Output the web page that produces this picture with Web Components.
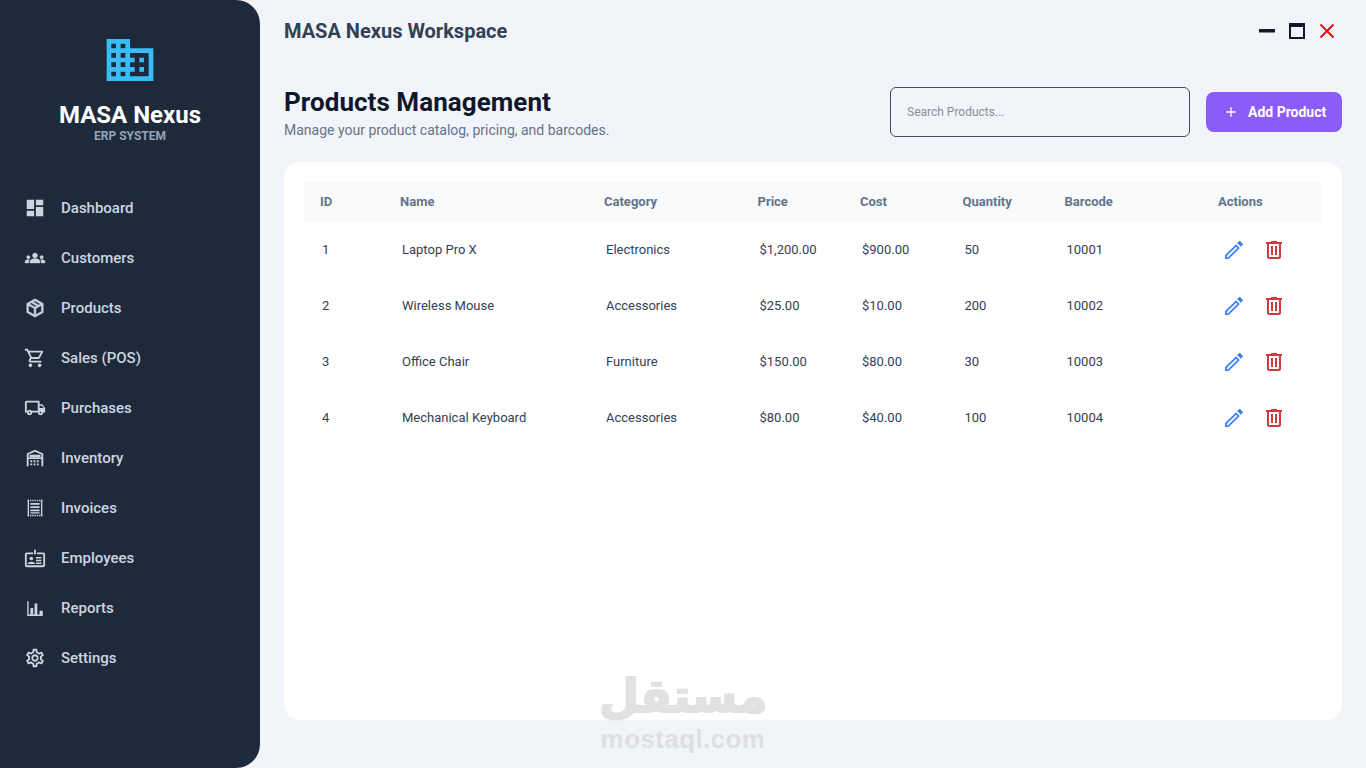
<!DOCTYPE html>
<html>
<head>
<meta charset="utf-8">
<title>MASA Nexus</title>
<style>
html,body{margin:0;height:100%;}
body{background:#f1f5f9;font-family:Roboto,"Liberation Sans",sans-serif;overflow:hidden;}
</style>
</head>
<body>
<app-shell>
  <side-bar slot="side"></side-bar>
  <top-bar slot="top"></top-bar>
  <page-header slot="main"></page-header>
  <products-table slot="main"></products-table>
</app-shell>
<water-mark></water-mark>

<script>
const ICONS = {
    logo:'<path d="M12 7V3H2v18h20V7H10zM6 19H4v-2h2v2zm0-4H4v-2h2v2zm0-4H4V9h2v2zm0-4H4V5h2v2zm4 12H8v-2h2v2zm0-4H8v-2h2v2zm0-4H8V9h2v2zm0-4H8V5h2v2zm10 12h-8v-2h2v-2h-2v-2h2v-2h-2V9h8v10zm-2-8h-2v2h2v-2zm0 4h-2v2h2v-2z"/>',
    dashboard:'<path d="M3 13h8V3H3v10zm0 8h8v-6H3v6zm10 0h8V11h-8v10zm0-18v6h8V3h-8z"/>',
    customers:'<g transform="translate(1.1 1.1) scale(.908)"><path stroke="currentColor" stroke-width=".5" d="M12 12.75c1.63 0 3.07.39 4.24.9 1.08.48 1.76 1.56 1.76 2.73V18H6v-1.61c0-1.18.68-2.26 1.76-2.73 1.17-.52 2.61-.91 4.24-.91zM4 13c1.1 0 2-.9 2-2s-.9-2-2-2-2 .9-2 2 .9 2 2 2zm1.13 1.1c-.37-.06-.74-.1-1.13-.1-.99 0-1.93.21-2.78.58C.48 14.9 0 15.62 0 16.43V18h4.5v-1.61c0-.83.23-1.61.63-2.29zM20 13c1.1 0 2-.9 2-2s-.9-2-2-2-2 .9-2 2 .9 2 2 2zm4 3.43c0-.81-.48-1.53-1.22-1.85-.85-.37-1.79-.58-2.78-.58-.39 0-.76.04-1.13.1.4.68.63 1.46.63 2.29V18H24v-1.57zM12 6c1.66 0 3 1.34 3 3s-1.34 3-3 3-3-1.34-3-3 1.34-3 3-3z"/></g>',
    products:'<path stroke="currentColor" stroke-width=".5" fill-rule="evenodd" d="M12 2l9 5v10l-9 5-9-5V7l9-5zM5 9.2v6.6l6 3.4v-6.6L5 9.2zm8 3.4v6.6l6-3.4V9.2l-6 3.4zM6.1 7.5L12 10.8l1.9-1.1-5.9-3.3-1.9 1.1zm3.900-2.200l5.900 3.300 2-1.100L12 4.300l-2 1z"/>',
    sales:'<path d="M15.55 13c.75 0 1.41-.41 1.75-1.03l3.58-6.49c.37-.66-.11-1.48-.87-1.48H5.21l-.94-2H1v2h2l3.6 7.59-1.35 2.44C4.52 15.37 5.48 17 7 17h12v-2H7l1.1-2h7.45zM6.16 6h12.15l-2.76 5H8.53L6.16 6zM7 18c-1.1 0-1.99.9-1.99 2S5.9 22 7 22s2-.9 2-2-.9-2-2-2zm10 0c-1.1 0-1.99.9-1.99 2s.89 2 1.99 2 2-.9 2-2-.9-2-2-2z"/>',
    purchases:'<path d="M20 8h-3V4H3c-1.1 0-2 .9-2 2v11h2c0 1.66 1.34 3 3 3s3-1.34 3-3h6c0 1.66 1.34 3 3 3s3-1.34 3-3h2v-5l-3-4zm-.5 1.5l1.96 2.5H17V9.5h2.5zM6 18c-.55 0-1-.45-1-1s.45-1 1-1 1 .45 1 1-.45 1-1 1zm2.22-3c-.55-.61-1.33-1-2.22-1s-1.67.39-2.22 1H3V6h12v9H8.22zM18 18c-.55 0-1-.45-1-1s.45-1 1-1 1 .45 1 1-.45 1-1 1z"/>',
    inventory:'<path fill-rule="evenodd" d="M12 3l9 4v14h-2v-8H5v8H3V7l9-4zM5 11.500h14V8.300L12 5.200 5 8.300v3.200z"/><path d="M6 8.500h12v3H6zM7 14.500h2v2H7zM10.500 14.500h2v2h-2zM14 14.500h2v2h-2zM7 18h2v2H7zM10.500 18h2v2h-2zM14 18h2v2h-2z"/>',
    invoices:'<path d="M4 3.800h16M4 20.200h16" fill="none" stroke="currentColor" stroke-width="1.600" stroke-dasharray="1.500 1"/><path d="M4 3h1.500v18H4zM18.500 3H20v18h-1.500zM7 6.500h10v2H7zM7 10h10v2H7zM7 13.500h10v2H7zM7 16.500h10v1.500H7z"/>',
    employees:'<path fill-rule="evenodd" d="M3 6h7v2H3v12h18V8h-7V6h7c1.100 0 2 .9 2 2v12c0 1.100-.9 2-2 2H3c-1.100 0-2-.9-2-2V8c0-1.100.9-2 2-2z"/><path d="M11 3h2v5h-2zM13 11h6v1.500h-6zM13 14h6v1.500h-6zM13 17h6v1.500h-6z"/><circle cx="8" cy="12.500" r="2"/><path d="M4 18.500c0-1.600 2-2.500 4-2.500s4 .9 4 2.500z"/>',
    reports:'<path d="M3.500 4.500H5V19h15.500v1.700h-17zM7 12h3v7H7zM11.500 7h3v12h-3zM17 15h3.500v4H17z"/>',
    settings:'<path d="M19.43 12.98c.04-.32.07-.64.07-.98 0-.34-.03-.66-.07-.98l2.11-1.65c.19-.15.24-.42.12-.64l-2-3.46c-.09-.16-.26-.25-.44-.25-.06 0-.12.01-.17.03l-2.49 1c-.52-.4-1.08-.73-1.69-.98l-.38-2.65C14.46 2.18 14.25 2 14 2h-4c-.25 0-.46.18-.49.42l-.38 2.65c-.61.25-1.17.59-1.69.98l-2.49-1c-.06-.02-.12-.03-.18-.03-.17 0-.34.09-.43.25l-2 3.46c-.13.22-.07.49.12.64l2.11 1.65c-.04.32-.07.65-.07.98 0 .33.03.66.07.98l-2.11 1.65c-.19.15-.24.42-.12.64l2 3.46c.09.16.26.25.44.25.06 0 .12-.01.17-.03l2.49-1c.52.4 1.08.73 1.69.98l.38 2.65c.03.24.24.42.49.42h4c.25 0 .46-.18.49-.42l.38-2.65c.61-.25 1.17-.59 1.69-.98l2.49 1c.06.02.12.03.18.03.17 0 .34-.09.43-.25l2-3.46c.12-.22.07-.49-.12-.64l-2.11-1.65zm-1.98-1.71c.04.31.05.52.05.73 0 .21-.02.43-.05.73l-.14 1.13.89.7 1.08.84-.7 1.21-1.27-.51-1.04-.42-.9.68c-.43.32-.84.56-1.25.73l-1.06.43-.16 1.13-.2 1.35h-1.4l-.19-1.35-.16-1.13-1.06-.43c-.43-.18-.83-.41-1.23-.71l-.91-.7-1.06.43-1.27.51-.7-1.21 1.08-.84.89-.7-.14-1.13c-.03-.31-.05-.54-.05-.74s.02-.43.05-.73l.14-1.13-.89-.7-1.08-.84.7-1.21 1.27.51 1.04.42.9-.68c.43-.32.84-.56 1.25-.73l1.06-.43.16-1.13.2-1.35h1.39l.19 1.35.16 1.13 1.06.43c.43.18.83.41 1.23.71l.91.7 1.06-.43 1.27-.51.7 1.21-1.07.85-.89.7.14 1.13zM12 8c-2.21 0-4 1.79-4 4s1.79 4 4 4 4-1.79 4-4-1.79-4-4-4zm0 6c-1.1 0-2-.9-2-2s.9-2 2-2 2 .9 2 2-.9 2-2 2z"/>',
    edit:'<path d="M3 17.25V21h3.75L17.81 9.94l-3.75-3.75L3 17.25zM4.700 19.300v-1.300l9.360-9.360 1.300 1.300L6 19.300H4.700zM20.71 7.04c.39-.39.39-1.02 0-1.41l-2.34-2.34c-.39-.39-1.02-.39-1.41 0l-1.83 1.83 3.75 3.75 1.83-1.83z"/>',
    trash:'<path d="M9 3v1H4v2h1v13c0 1.100.9 2 2 2h10c1.100 0 2-.9 2-2V6h1V4h-5V3H9zM7 6h10v13H7V6zm2 2v9h2V8H9zm4 0v9h2V8h-2z"/>',
    plus:'<path d="M19 13h-6v6h-2v-6H5v-2h6V5h2v6h6v2z"/>'
}

function icon(name,size){
    return `<svg width="${size}" height="${size}" viewBox="0 0 24 24" fill="currentColor" aria-hidden="true">${ICONS[name]}</svg>`
}

class AppShell extends HTMLElement{
    constructor(){
        super()
        this.attachShadow({mode:'open'})
        this.shadowRoot.innerHTML = `
        <style>
            :host{display:flex;height:768px;width:1366px;}
            .content{flex:1;min-width:0;display:flex;flex-direction:column;padding:0 24px;}
            .main{flex:1;min-height:0;display:flex;flex-direction:column;padding-bottom:48px;}
        </style>
        <slot name="side"></slot>
        <div class="content">
            <slot name="top"></slot>
            <div class="main"><slot name="main"></slot></div>
        </div>`
    }
}

class SideBar extends HTMLElement{
    constructor(){
        super()
        this.attachShadow({mode:'open'})
        const items = [
            ['dashboard','Dashboard'],['customers','Customers'],['products','Products'],
            ['sales','Sales (POS)'],['purchases','Purchases'],['inventory','Inventory'],
            ['invoices','Invoices'],['employees','Employees'],['reports','Reports'],['settings','Settings']
        ]
        this.shadowRoot.innerHTML = `
        <style>
            :host{display:block;width:260px;flex:none;height:768px;background:#1e293b;border-radius:0 24px 24px 0;color:#cbd5e1;}
            .brand{display:flex;flex-direction:column;align-items:center;padding-top:32px;height:151px;box-sizing:border-box;}
            .brand svg{color:#38bdf8;display:block;}
            .name{font-size:24px;font-weight:700;color:#fff;line-height:28px;margin-top:13px;}
            .sub{font-size:12px;font-weight:700;color:#94a3b8;line-height:14px;margin-top:0;}
            nav{display:flex;flex-direction:column;padding-top:32px;}
            a{display:flex;align-items:center;height:50px;padding-left:24px;gap:15px;font-size:15px;font-weight:500;color:#cbd5e1;}
            a svg{flex:none;}
        </style>
        <div class="brand">
            ${icon('logo',56)}
            <div class="name">MASA Nexus</div>
            <div class="sub">ERP SYSTEM</div>
        </div>
        <nav>${items.map(i=>`<a>${icon(i[0],22)}<span>${i[1]}</span></a>`).join('')}</nav>`
    }
}

class TopBar extends HTMLElement{
    constructor(){
        super()
        this.attachShadow({mode:'open'})
        this.shadowRoot.innerHTML = `
        <style>
            :host{display:flex;align-items:center;justify-content:space-between;height:62px;flex:none;}
            h2{margin:0;font-size:20px;font-weight:700;color:#334155;line-height:24px;}
            .controls{display:flex;align-items:center;gap:14px;padding-right:7px;}
            .controls svg{display:block;}
        </style>
        <h2>MASA Nexus Workspace</h2>
        <div class="controls">
            <svg width="16" height="16" viewBox="0 0 16 16"><rect y="6" width="16" height="3.500" fill="#111827"/></svg>
            <svg width="16" height="16" viewBox="0 0 16 16"><path d="M0 0h16v16H0zM2 4v10h12V4z" fill="#111827" fill-rule="evenodd"/></svg>
            <svg width="16" height="16" viewBox="0 0 16 16"><path d="M1.500 1.500l13 13M14.500 1.500l-13 13" stroke="#dc1414" stroke-width="2" fill="none"/></svg>
        </div>`
    }
}

class PageHeader extends HTMLElement{
    constructor(){
        super()
        this.attachShadow({mode:'open'})
        this.shadowRoot.innerHTML = `
        <style>
            :host{display:flex;align-items:center;justify-content:space-between;height:100px;flex:none;}
            .title{padding-top:2px;}
            h1{margin:0;font-size:26px;font-weight:700;color:#0f172a;line-height:30px;letter-spacing:.05px;}
            p{margin:4px 0 0;font-size:14px;color:#64748b;line-height:18px;}
            .right{display:flex;align-items:center;gap:16px;}
            input{box-sizing:border-box;width:300px;height:50px;padding:0 16px;border:1px solid #444b55;border-radius:6px;background:#f1f5f9;font:12px Roboto,sans-serif;outline:none;}
            input::placeholder{color:#8a8f96;opacity:1;}
            button{box-sizing:border-box;display:flex;align-items:center;gap:9px;height:40px;width:136px;padding:0 0 0 17px;border:0;border-radius:8px;background:#8b5cf6;color:#fff;font:700 14px Roboto,sans-serif;}
        </style>
        <div class="title">
            <h1>Products Management</h1>
            <p>Manage your product catalog, pricing, and barcodes.</p>
        </div>
        <div class="right">
            <input placeholder="Search Products...">
            <button>${icon('plus',16)}<span>Add Product</span></button>
        </div>`
    }
}

class ProductsTable extends HTMLElement{
    constructor(){
        super()
        this.attachShadow({mode:'open'})
        const rows = [
            ['1','Laptop Pro X','Electronics','$1,200.00','$900.00','50','10001'],
            ['2','Wireless Mouse','Accessories','$25.00','$10.00','200','10002'],
            ['3','Office Chair','Furniture','$150.00','$80.00','30','10003'],
            ['4','Mechanical Keyboard','Accessories','$80.00','$40.00','100','10004']
        ]
        const heads = ['ID','Name','Category','Price','Cost','Quantity','Barcode','Actions']
        this.shadowRoot.innerHTML = `
        <style>
            :host{display:block;flex:1;min-height:0;background:#fff;border-radius:16px;padding:20px;box-sizing:border-box;}
            .row{display:grid;grid-template-columns:80px 204px 153.500px 102.500px 102.500px 102px 153.500px 1fr;align-items:center;}
            .head{height:40px;background:#f8fafc;font-size:13px;font-weight:700;color:#64748b;padding-left:16px;}
            .head > span{padding-bottom:2px;}
            .body{height:56px;font-size:13px;color:#334155;padding-left:18px;}
            .body > span{padding-bottom:2px;}
            .acts{display:flex;align-items:center;gap:16px;padding-left:2px;}
            .acts svg{display:block;}
            .edit{color:#3b82f6;}
            .del{color:#d13b3b;}
        </style>
        <div class="row head">${heads.map(h=>`<span>${h}</span>`).join('')}</div>
        ${rows.map(r=>`<div class="row body">${r.map(c=>`<span>${c}</span>`).join('')}
            <div class="acts"><div class="edit">${icon('edit',24)}</div><div class="del">${icon('trash',24)}</div></div>
        </div>`).join('')}`
    }
}

class WaterMark extends HTMLElement{
    constructor(){
        super()
        this.attachShadow({mode:'open'})
        this.shadowRoot.innerHTML = `
        <style>
            :host{position:absolute;left:583px;top:669px;width:200px;text-align:center;pointer-events:none;color:#dcdcdc;opacity:.85;}
            .ar{font:700 46px/55px "DejaVu Sans",sans-serif;-webkit-text-stroke:2px #dcdcdc;}
            .en{font:700 26px/30px "Liberation Sans",sans-serif;letter-spacing:.4px;}
        </style>
        <div class="ar" dir="rtl">مستقل</div>
        <div class="en">mostaql.com</div>`
    }
}

customElements.define('app-shell',AppShell)
customElements.define('side-bar',SideBar)
customElements.define('top-bar',TopBar)
customElements.define('page-header',PageHeader)
customElements.define('products-table',ProductsTable)
customElements.define('water-mark',WaterMark)
</script>
</body>
</html>
